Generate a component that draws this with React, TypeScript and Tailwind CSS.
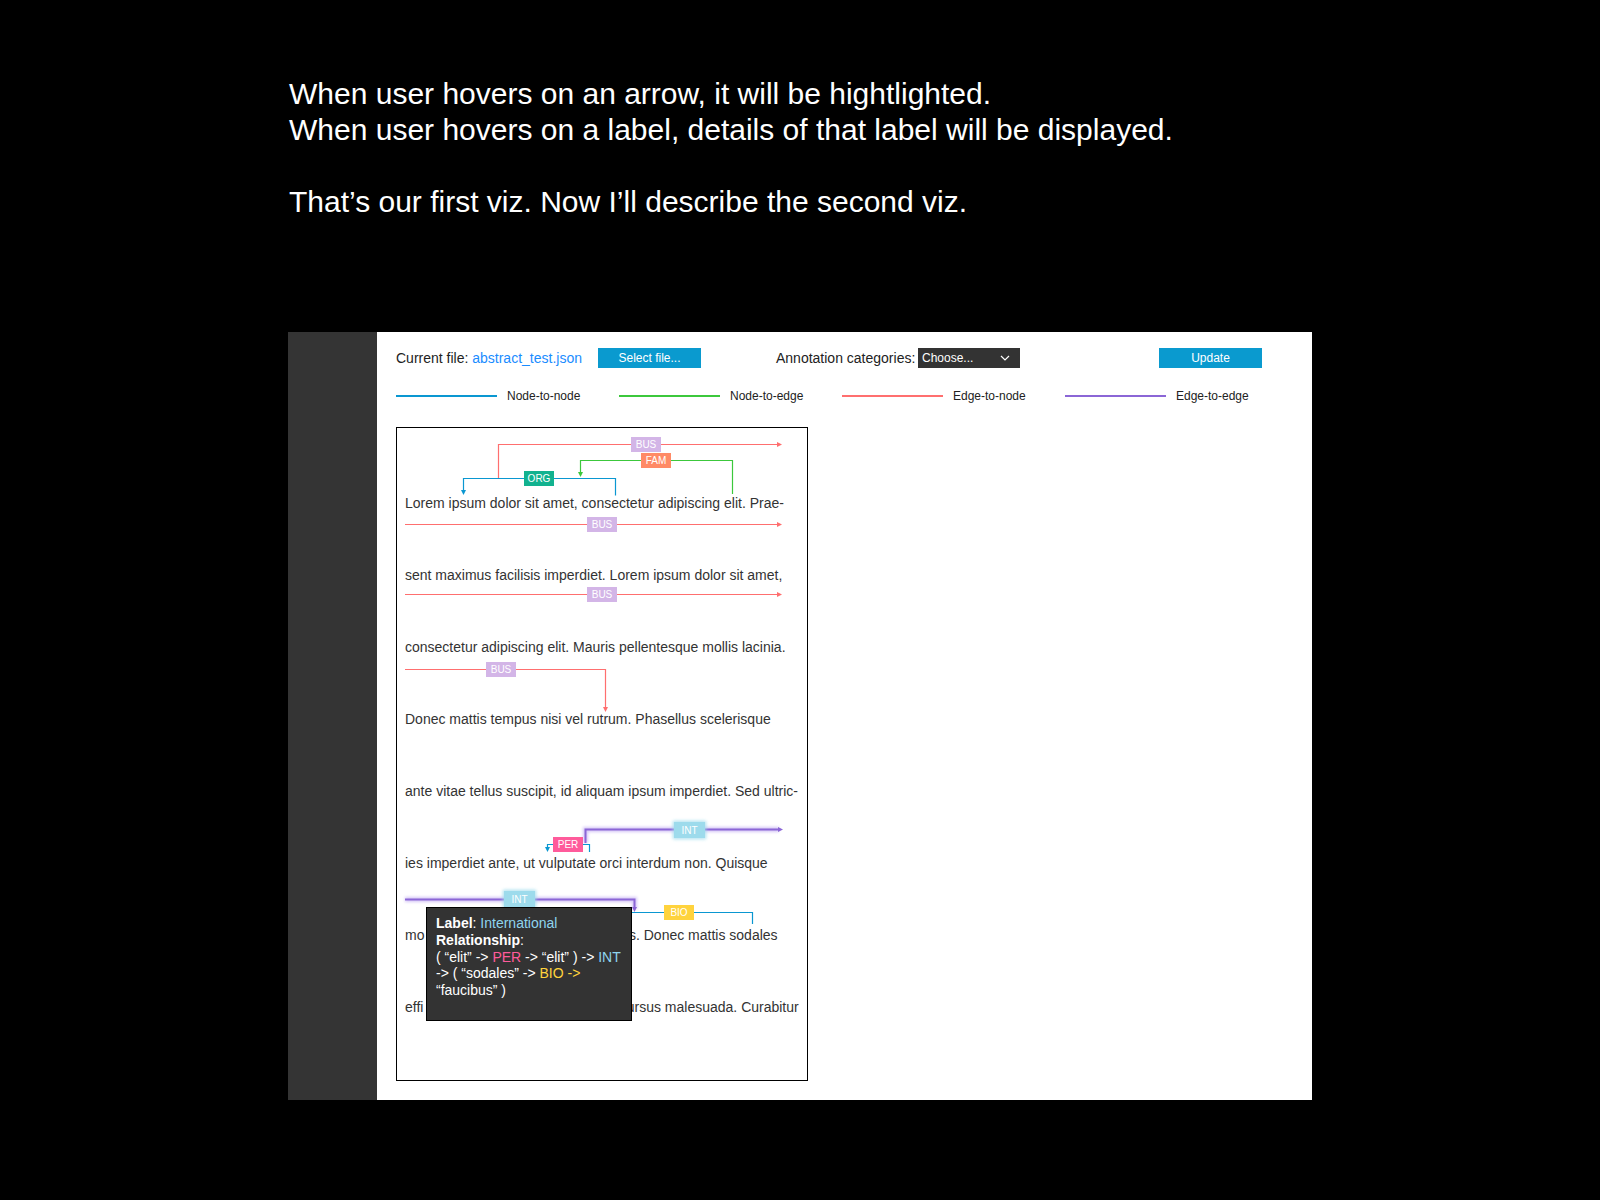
import React from "react";

const BLUE = "#0a97d1";
const GREEN = "#3cc83c";
const RED = "#ff6f6f";
const PURPLE = "#8b66d6";

function ArrowRight({ x, y, c }: { x: number; y: number; c: string }) {
  return <polygon points={`${x - 5},${y - 2.5} ${x},${y} ${x - 5},${y + 2.5}`} fill={c} />;
}
function ArrowDown({ x, y, c }: { x: number; y: number; c: string }) {
  return <polygon points={`${x - 2.5},${y - 5} ${x},${y} ${x + 2.5},${y - 5}`} fill={c} />;
}
function Tag({ x, y, w = 30, h = 15, fill, text, glow }: { x: number; y: number; w?: number; h?: number; fill: string; text: string; glow?: boolean }) {
  return (
    <g>
      {glow && <rect x={x - 1.5} y={y - 1.5} width={w + 3} height={h + 3} rx={2} fill={fill} opacity={0.7} filter="url(#blur)" />}
      <rect x={x} y={y} width={w} height={h} fill={fill} />
      <text x={x + w / 2} y={y + h / 2 + 3.6} textAnchor="middle" fontSize={10} fill="#ffffff" fontFamily="'Liberation Sans', Arial, sans-serif">
        {text}
      </text>
    </g>
  );
}

function Annotations() {
  const line = { fill: "none", strokeWidth: 1.2 } as const;
  return (
    <svg className="absolute inset-0" width={410} height={652} viewBox="0 0 410 652">
      <defs>
        <filter id="blur" x="-50%" y="-50%" width="200%" height="200%">
          <feGaussianBlur stdDeviation="1.6" />
        </filter>
      </defs>
      {/* line 1 */}
      <path d="M101.5 50.5 V16.5 H381" stroke={RED} {...line} />
      <ArrowRight x={385} y={16.5} c={RED} />
      <path d="M335.5 66 V32.5 H183.5 V45" stroke={GREEN} {...line} />
      <ArrowDown x={183.5} y={49} c={GREEN} />
      <path d="M66.5 63 V50.5 H218.5 V67.5" stroke={BLUE} {...line} />
      <ArrowDown x={66.5} y={67} c={BLUE} />
      <Tag x={234} y={9} fill="#d3b5e7" text="BUS" />
      <Tag x={244} y={25} fill="#ff8a66" text="FAM" />
      <Tag x={127} y={43} fill="#12b28f" text="ORG" />

      {/* line 2 */}
      <path d="M8 96.5 H381" stroke={RED} {...line} />
      <ArrowRight x={385} y={96.5} c={RED} />
      <Tag x={190} y={89} fill="#d3b5e7" text="BUS" />

      {/* line 3 */}
      <path d="M8 166.5 H381" stroke={RED} {...line} />
      <ArrowRight x={385} y={166.5} c={RED} />
      <Tag x={190} y={159} fill="#d3b5e7" text="BUS" />

      {/* line 4 */}
      <path d="M8 241.5 H208.5 V280" stroke={RED} {...line} />
      <ArrowDown x={208.5} y={284} c={RED} />
      <Tag x={89} y={234} fill="#d3b5e7" text="BUS" />

      {/* line 6 */}
      <path d="M188.5 415 V401.5 H382" stroke="#b9a0f0" strokeWidth={5} fill="none" opacity={0.6} filter="url(#blur)" />
      <path d="M188.5 415 V401.5 H381" stroke={PURPLE} strokeWidth={2} fill="none" />
      <ArrowRight x={386} y={401.5} c={PURPLE} />
      <Tag x={277} y={394} w={31} h={16} fill="#9ddbec" text="INT" glow />
      <path d="M150.5 420 V416.5 H192.5 V424" stroke={BLUE} {...line} />
      <ArrowDown x={150.5} y={424} c={BLUE} />
      <Tag x={156} y={409} fill="#ff5b9b" text="PER" />

      {/* line 7 */}
      <path d="M217.5 492 V484.5 H355.5 V496" stroke={BLUE} {...line} />
      <ArrowDown x={217.5} y={496} c={BLUE} />
      <path d="M8 471.5 H237.5 V481" stroke="#b9a0f0" strokeWidth={5} fill="none" opacity={0.6} filter="url(#blur)" />
      <path d="M8 471.5 H237.5 V479" stroke={PURPLE} strokeWidth={2} fill="none" />
      <ArrowDown x={237.5} y={484} c={PURPLE} />
      <Tag x={107} y={463} w={31} h={16} fill="#9ddbec" text="INT" glow />
      <Tag x={267} y={477} fill="#ffd33d" text="BIO" />
    </svg>
  );
}

const lines = [
  "Lorem ipsum dolor sit amet, consectetur adipiscing elit. Prae-",
  "sent maximus facilisis imperdiet. Lorem ipsum dolor sit amet,",
  "consectetur adipiscing elit. Mauris pellentesque mollis lacinia.",
  "Donec mattis tempus nisi vel rutrum. Phasellus scelerisque",
  "ante vitae tellus suscipit, id aliquam ipsum imperdiet. Sed ultric-",
  "ies imperdiet ante, ut vulputate orci interdum non. Quisque",
];

const legend = [
  { c: BLUE, t: "Node-to-node" },
  { c: GREEN, t: "Node-to-edge" },
  { c: RED, t: "Edge-to-node" },
  { c: PURPLE, t: "Edge-to-edge" },
];

export default function App() {
  return (
    <div className="w-[1600px] h-[1200px] bg-black overflow-hidden font-['Liberation_Sans',Arial,sans-serif]">
      <div className="pt-[76px] pl-[289px] text-white text-[30px] leading-[36px]">
        <p>When user hovers on an arrow, it will be hightlighted.</p>
        <p>When user hovers on a label, details of that label will be displayed.</p>
        <p className="mt-[36px]">That’s our first viz. Now I’ll describe the second viz.</p>
      </div>

      <div className="mt-[112px] ml-[288px] w-[1024px] h-[768px] flex">
        <div className="w-[89px] h-full bg-[#343434]" />
        <div className="flex-1 h-full bg-white pl-[19px] pt-[16px] flex flex-col">
          <div className="h-[20px] flex items-center text-[14px] text-[#222]">
            <div className="w-[202px] whitespace-nowrap">
              Current file: <span className="text-[#1a8cff]">abstract_test.json</span>
            </div>
            <div className="w-[103px] h-[20px] bg-[#0a9acf] text-white text-[12px] flex items-center justify-center">
              Select file...
            </div>
            <div className="ml-[75px] w-[142px] whitespace-nowrap">Annotation categories:</div>
            <div className="w-[102px] h-[20px] bg-[#333333] text-white text-[12px] flex items-center justify-between pl-[4px] pr-[10px]">
              <span>Choose...</span>
              <svg width="10" height="6" viewBox="0 0 10 6">
                <path d="M1 1 L5 5 L9 1" stroke="#ffffff" strokeWidth="1.2" fill="none" />
              </svg>
            </div>
            <div className="ml-[139px] w-[103px] h-[20px] bg-[#0a9acf] text-white text-[12px] flex items-center justify-center">
              Update
            </div>
          </div>

          <div className="mt-[21px] h-[14px] flex items-center text-[12px] text-[#222]">
            {legend.map((l) => (
              <div key={l.t} className="w-[223px] flex items-center">
                <div className="w-[101px] h-[2px]" style={{ backgroundColor: l.c }} />
                <span className="ml-[10px] whitespace-nowrap">{l.t}</span>
              </div>
            ))}
          </div>

          <div className="mt-[24px] w-[412px] h-[654px] border border-black relative">
            <div className="pt-[39px] pl-[8px] text-[14px] leading-[72px] text-[#333333] whitespace-nowrap">
              {lines.map((t, i) => (
                <div key={i}>{t}</div>
              ))}
              <div className="flex">
                <span>mo</span>
                <span className="inline-block w-[204.5px]" />
                <span>s. Donec mattis sodales</span>
              </div>
              <div className="flex">
                <span>effi</span>
                <span className="inline-block w-[203.3px]" />
                <span>ursus malesuada. Curabitur</span>
              </div>
            </div>
            <Annotations />
            <div className="absolute left-[29px] top-[479px] w-[206px] h-[114px] bg-[#333333] border border-black pl-[9px] pt-[7px] text-[14px] leading-[16.8px] text-white whitespace-nowrap">
              <div>
                <b>Label</b>: <span className="text-[#8fd5ee]">International</span>
              </div>
              <div>
                <b>Relationship</b>:
              </div>
              <div>
                ( “elit” -&gt; <span className="text-[#ff5b9b]">PER</span> -&gt; “elit” ) -&gt; <span className="text-[#8fd5ee]">INT</span>
              </div>
              <div>
                -&gt; ( “sodales” -&gt; <span className="text-[#ffd33d]">BIO -&gt;</span>
              </div>
              <div>“faucibus” )</div>
            </div>
          </div>
        </div>
      </div>
    </div>
  );
}
